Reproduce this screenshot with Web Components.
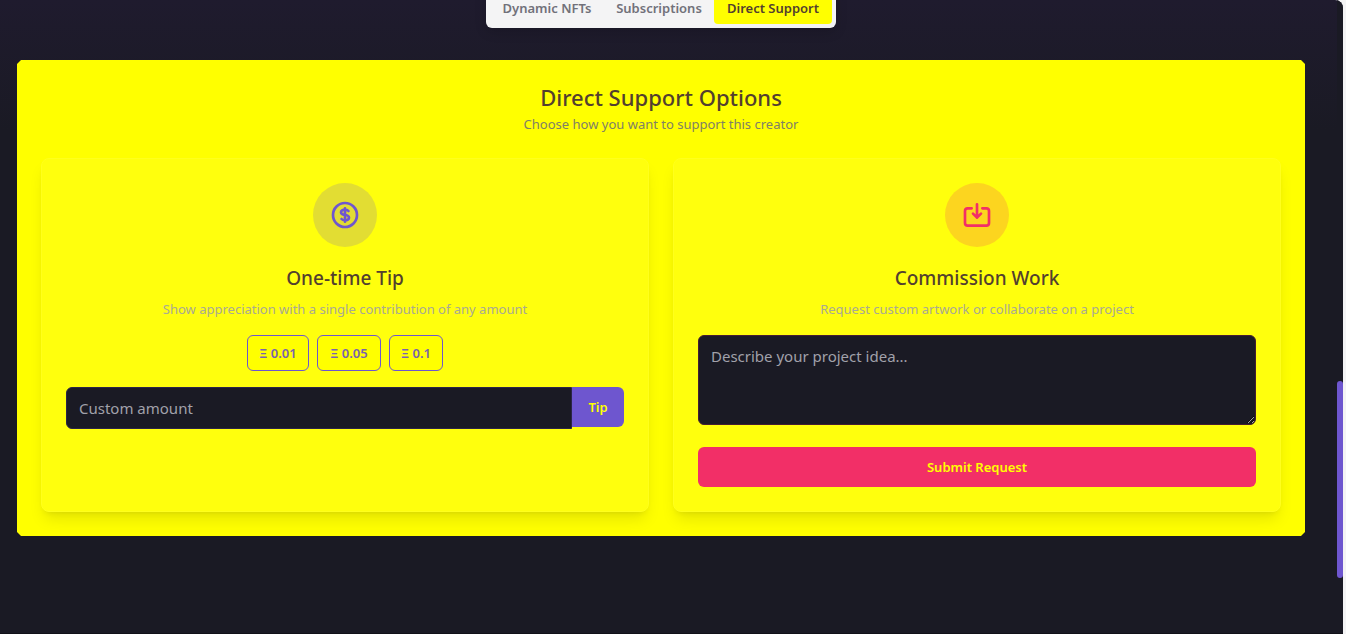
<!DOCTYPE html>
<html lang="en">
<head>
<meta charset="utf-8">
<meta name="viewport" content="width=device-width, initial-scale=1">
<title>Direct Support</title>
<style>
  html, body { height: 100%; margin: 0; }
  body { background: #f4f4f5; font-family: "Noto Sans", "Open Sans", sans-serif; }
</style>
</head>
<body>
<creator-page>
  <support-tabs slot="tabs"></support-tabs>
  <support-panel heading="Direct Support Options" note="Choose how you want to support this creator">
    <support-card heading="One-time Tip" note="Show appreciation with a single contribution of any amount" style="--accent: #6e56cf; --tint: rgba(110, 86, 207, .2)">
      <svg slot="icon" width="32" height="32" viewBox="0 0 24 24" fill="none" stroke="currentColor" stroke-width="2" stroke-linecap="round" stroke-linejoin="round" aria-hidden="true"><path d="M12 8c-1.657 0-3 .895-3 2s1.343 2 3 2 3 .895 3 2-1.343 2-3 2m0-8c1.11 0 2.08.402 2.599 1M12 8V7m0 1v8m0 0v1m0-1c-1.11 0-2.08-.402-2.599-1M21 12a9 9 0 11-18 0 9 9 0 0118 0z"/></svg>
      <tip-form></tip-form>
    </support-card>
    <support-card heading="Commission Work" note="Request custom artwork or collaborate on a project" style="--accent: #f22f67; --tint: rgba(242, 47, 103, .2)">
      <svg slot="icon" width="32" height="32" viewBox="0 0 24 24" fill="none" stroke="currentColor" stroke-width="2" stroke-linecap="round" stroke-linejoin="round" aria-hidden="true"><path d="M8 7H5a2 2 0 00-2 2v9a2 2 0 002 2h14a2 2 0 002-2V9a2 2 0 00-2-2h-3m-1 4l-3 3m0 0l-3-3m3 3V4"/></svg>
      <commission-form></commission-form>
    </support-card>
  </support-panel>
</creator-page>

<script>
const define = (name, html, setup) => {
  const template = document.createElement('template');
  template.innerHTML = '<style>*, ::before, ::after { box-sizing: border-box; }</style>' + html;
  customElements.define(name, class extends HTMLElement {
    connectedCallback() {
      if (this.shadowRoot) return;
      const root = this.attachShadow({ mode: 'open' });
      root.append(template.content.cloneNode(true));
      if (setup) setup(this, root);
    }
  });
};
const fillHeading = (host, root) => {
  root.querySelector('h2, h3').textContent = host.getAttribute('heading');
  root.querySelector('p').textContent = host.getAttribute('note');
};

define('creator-page', `
  <style>
    :host { display: block; height: 100vh; padding-right: 3px; box-sizing: border-box; overflow: hidden; }
    .frame { display: flex; height: 100%; overflow: hidden; border-radius: 0 8px 0 0; background: linear-gradient(#1f1b2e, #1a1a24 130px); border-bottom: 1px solid #111118; }
    main { flex: 1; min-width: 0; padding: 0 32px 0 17px; }
    .tabs { display: flex; justify-content: center; margin: -12px 0 32px; }
    .track { flex: none; width: 6px; display: grid; grid-template-rows: 382fr 197fr 55fr; background: #1a1a24; }
    .thumb { grid-row: 2; border-radius: 3px; background: #6e56cf; }
  </style>
  <div class="frame">
    <main><div class="tabs"><slot name="tabs"></slot></div><slot></slot></main>
    <div class="track"><div class="thumb"></div></div>
  </div>`);

define('support-tabs', `
  <style>
    :host { display: block; }
    div { display: grid; grid-template-columns: 114px 110px 118px; height: 40px; padding: 4px; border-radius: 6px; background: #f4f4f5; box-shadow: 0 4px 12px rgba(0, 0, 0, .15); }
    button { border: 0; border-radius: 4px; padding: 0; background: none; color: #71717a; font: 600 13px/20px "Noto Sans", sans-serif; white-space: nowrap; }
    [aria-selected=true] { background: #ff0; color: #533f2f; }
  </style>
  <div role="tablist">
    <button role="tab" aria-selected="false">Dynamic NFTs</button>
    <button role="tab" aria-selected="false">Subscriptions</button>
    <button role="tab" aria-selected="true">Direct Support</button>
  </div>`);

define('support-panel', `
  <style>
    :host { display: block; }
    section { padding: 24px; background: #ff0; clip-path: polygon(4px 0, calc(100% - 4px) 0, 100% 4px, 100% calc(100% - 4px), calc(100% - 4px) 100%, 4px 100%, 0 calc(100% - 4px), 0 4px); }
    header { margin-bottom: 24px; text-align: center; }
    h2 { margin: 0 0 4px; color: #533f2f; font-size: 22px; line-height: 26px; font-weight: 500; }
    p { margin: 0; color: #808066; font-size: 13px; line-height: 20px; }
    .cards { display: grid; grid-template-columns: 1fr 1fr; gap: 24px; }
  </style>
  <section>
    <header><h2></h2><p></p></header>
    <div class="cards"><slot></slot></div>
  </section>`, fillHeading);

define('support-card', `
  <style>
    :host { display: flex; flex-direction: column; align-items: center; box-sizing: border-box; padding: 24px; border: 1px solid #ffff1c; border-radius: 8px; background: #ffff0d; box-shadow: 0 10px 15px -3px rgba(0, 0, 0, .1), 0 4px 6px -4px rgba(0, 0, 0, .1); }
    .icon { display: grid; place-items: center; width: 64px; height: 64px; margin-bottom: 16px; border-radius: 50%; background: var(--tint); color: var(--accent); }
    h3 { margin: 0 0 6px; color: #533f2f; font-size: 19px; line-height: 30px; font-weight: 500; }
    p { margin: 0 0 16px; color: #a9a994; font-size: 13px; line-height: 20px; text-align: center; }
    .body { align-self: stretch; }
  </style>
  <div class="icon"><slot name="icon"></slot></div>
  <h3></h3><p></p>
  <div class="body"><slot></slot></div>`, fillHeading);

define('tip-form', `
  <style>
    :host { display: block; }
    button { font: 600 13px/20px "Noto Sans", sans-serif; }
    .presets { display: flex; justify-content: center; gap: 8px; margin-bottom: 16px; }
    .presets button { height: 36px; padding: 0; border: 1px solid #6e56cf; border-radius: 6px; background: #ff0; color: #7a62ae; width: 62px; }
    .presets button:nth-child(2) { width: 64px; }
    .presets button:nth-child(3) { width: 54px; }
    .custom { display: flex; align-items: flex-start; }
    input { flex: 1; min-width: 0; height: 42px; padding: 8px 12px; border: 1px solid #2b2546; border-radius: 6px 0 0 6px; background: #1a1a24; color: #fff; font: 15px/24px "Noto Sans", sans-serif; }
    input::placeholder { color: #a1a1aa; }
    .custom button { width: 52px; height: 40px; padding: 0; border: 0; border-radius: 0 6px 6px 0; background: #6e56cf; color: #ff0; }
  </style>
  <div class="presets"><button>Ξ 0.01</button><button>Ξ 0.05</button><button>Ξ 0.1</button></div>
  <div class="custom"><input type="text" placeholder="Custom amount" aria-label="Custom amount"><button>Tip</button></div>`);

define('commission-form', `
  <style>
    :host { display: block; }
    textarea { display: block; width: 100%; height: 90px; margin: 0 0 22px; padding: 8px 12px; border: 1px solid #451e31; border-radius: 6px; background: #1a1a24; color: #fff; font: 15px/24px "Noto Sans", sans-serif; resize: vertical; color-scheme: dark; }
    textarea::placeholder { color: #a1a1aa; }
    button { display: block; width: 100%; height: 40px; border: 0; border-radius: 6px; background: #f22f67; color: #ff0; font: 600 13px/20px "Noto Sans", sans-serif; }
  </style>
  <textarea placeholder="Describe your project idea..." aria-label="Describe your project idea"></textarea>
  <button>Submit Request</button>`);
</script>
</body>
</html>
